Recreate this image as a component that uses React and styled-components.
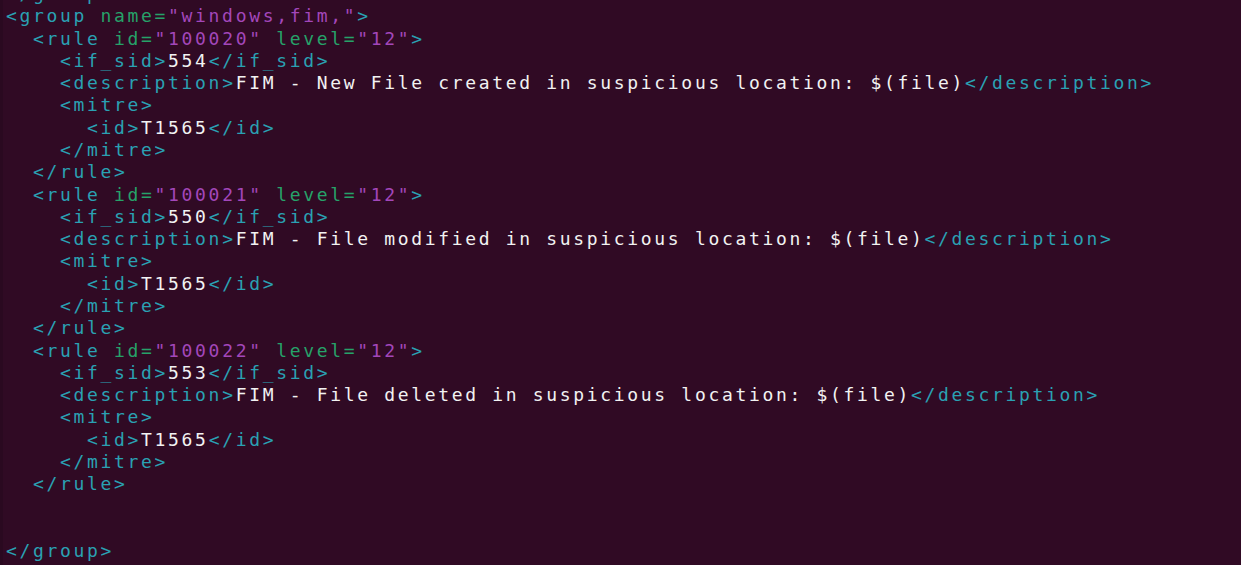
import React from "react";
import styled, { createGlobalStyle } from "styled-components";

const GlobalStyle = createGlobalStyle`
  html, body {
    margin: 0;
    padding: 0;
    background: #300a24;
    overflow: hidden;
  }
`;

const Terminal = styled.div`
  width: 1241px;
  height: 565px;
  overflow: hidden;
  background: #300a24;
  border-left: 3px solid #2a0920;
  box-sizing: border-box;
`;

const Code = styled.pre`
  margin: -17px 0 0 0;
  padding: 0 0 0 3px;
  font-family: "DejaVu Sans Mono", "Liberation Mono", monospace;
  font-size: 18px;
  letter-spacing: 2.67px;
  line-height: 22.29px;
  color: #f2f2f2;
`;

const Line = styled.div`
  height: 22.29px;
  white-space: pre;
`;

const colors = {
  tag: "#2aa1b3",
  attr: "#26a269",
  value: "#a347ba",
  text: "#f2f2f2",
};

const Token = styled.span`
  color: ${(p) => colors[p.$kind]};
`;

const source = `</group>
<group name="windows,fim,">
  <rule id="100020" level="12">
    <if_sid>554</if_sid>
    <description>FIM - New File created in suspicious location: $(file)</description>
    <mitre>
      <id>T1565</id>
    </mitre>
  </rule>
  <rule id="100021" level="12">
    <if_sid>550</if_sid>
    <description>FIM - File modified in suspicious location: $(file)</description>
    <mitre>
      <id>T1565</id>
    </mitre>
  </rule>
  <rule id="100022" level="12">
    <if_sid>553</if_sid>
    <description>FIM - File deleted in suspicious location: $(file)</description>
    <mitre>
      <id>T1565</id>
    </mitre>
  </rule>


</group>`;

// very small xml tokenizer, good enough for these lines
const tokenize = (line) => {
  const re = /(<\/?[\w_]+)|(\s+[\w_]+=)|("[^"]*")|(\/?>)|([^<>"]+)/g;
  const out = [];
  let m;
  while ((m = re.exec(line))) {
    if (m[1]) out.push(["tag", m[1]]);
    else if (m[2]) out.push(["attr", m[2]]);
    else if (m[3]) out.push(["value", m[3]]);
    else if (m[4]) out.push(["tag", m[4]]);
    else out.push(["text", m[5]]);
  }
  return out;
};

const App = () => {
  const lines = source.split("\n");
  return (
    <Terminal>
      <GlobalStyle />
      <Code>
        {lines.map((line, i) => (
          <Line key={i}>
            {tokenize(line).map(([kind, text], j) => (
              <Token key={j} $kind={kind}>
                {text}
              </Token>
            ))}
          </Line>
        ))}
      </Code>
    </Terminal>
  );
};

export default App;
